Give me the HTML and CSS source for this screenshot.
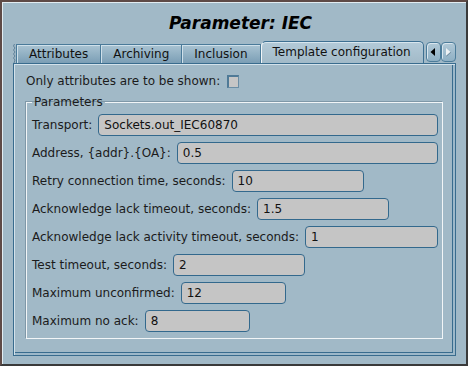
FILE: index.html
```html
<!DOCTYPE html>
<html lang="en">
<head>
    <meta charset="UTF-8">
    <title>Parameter: IEC</title>
    <link rel="stylesheet" href="styles.css">
</head>
<body>
    <div class="window">
        <div class="frame">
            <h1 class="title">Parameter: IEC</h1>

            <div class="tabs">
                <svg class="tear" width="3" height="19" viewBox="0 0 3 19">
                    <path d="M1.5 0 L0.5 2 L2 4 L0.5 6 L2 8 L0.5 10 L2 12 L0.5 14 L2 16 L1 19" fill="none" stroke="#5f8099" stroke-width="1"/>
                </svg>
                <div class="tab first">Attributes</div>
                <div class="tab">Archiving</div>
                <div class="tab">Inclusion</div>
                <div class="tab active">Template configuration</div>
                <div class="arrows">
                    <div class="arrow">
                        <svg width="13" height="18" viewBox="0 0 13 18"><polygon points="8,5 8,13 3.5,9" fill="#000"/></svg>
                    </div>
                    <div class="arrow">
                        <svg width="13" height="18" viewBox="0 0 13 18"><polygon points="4,5 4,13 8.5,9" fill="#eef2f4"/><polygon points="4,13 8.5,9 9.2,9.5 4.6,13.6" fill="#6f8a9c"/></svg>
                    </div>
                </div>
            </div>

            <div class="panel">
                <div class="check-row">
                    <span>Only attributes are to be shown:</span>
                    <span class="checkbox"></span>
                </div>

                <fieldset class="group">
                    <legend>Parameters</legend>
                    <div class="row">
                        <span>Transport:</span>
                        <div class="field grow">Sockets.out_IEC60870</div>
                    </div>
                    <div class="row">
                        <span>Address, {addr}.{OA}:</span>
                        <div class="field grow">0.5</div>
                    </div>
                    <div class="row">
                        <span>Retry connection time, seconds:</span>
                        <div class="field w132">10</div>
                    </div>
                    <div class="row">
                        <span>Acknowledge lack timeout, seconds:</span>
                        <div class="field w132">1.5</div>
                    </div>
                    <div class="row">
                        <span>Acknowledge lack activity timeout, seconds:</span>
                        <div class="field grow">1</div>
                    </div>
                    <div class="row">
                        <span>Test timeout, seconds:</span>
                        <div class="field w132">2</div>
                    </div>
                    <div class="row">
                        <span>Maximum unconfirmed:</span>
                        <div class="field w105">12</div>
                    </div>
                    <div class="row">
                        <span>Maximum no ack:</span>
                        <div class="field w105">8</div>
                    </div>
                </fieldset>
            </div>
        </div>
    </div>
</body>
</html>
```

FILE: styles.css
```css
body {
    margin: 0;
    font-family: "DejaVu Sans", sans-serif;
    font-size: 12px;
    color: #1b1b1b;
    background-color: #a1b9c7;
}
.window {
    width: 468px;
    height: 366px;
    box-sizing: border-box;
    border: 2px solid #3a3a3a;
    border-left-color: #5e4a46;
    border-top-color: #5e4a46;
    background-color: #a1b9c7;
}
.frame {
    height: 100%;
    box-sizing: border-box;
    border-top: 1px solid #e2ecf1;
    border-left: 1px solid #e2ecf1;
    padding: 0 10px;
}
.title {
    margin: 0;
    height: 38px;
    line-height: 40px;
    text-align: center;
    font-size: 17px;
    font-weight: bold;
    font-style: italic;
    color: #000;
    padding-left: 12px;
}
.tabs {
    display: flex;
    align-items: flex-end;
    height: 22px;
}
.tear {
    display: block;
}
.tab {
    height: 19px;
    line-height: 19px;
    padding: 0 12px;
    box-sizing: border-box;
    border: 1px solid #4a7a99;
    border-left: none;
    border-bottom: none;
    background: linear-gradient(#a9c3d2, #7b9eb5);
    box-shadow: inset 1px 1px 0 #cfe0ea;
    color: #111;
}
.tab.first {
    border-left: 1px solid #4a7a99;
}
.tab.active {
    height: 22px;
    line-height: 21px;
    padding: 0 12px 0 11px;
    margin-right: 1px;
    border-left: 1px solid #f2f6f8;
    border-top: 1px solid #3e7092;
    border-right: 1px solid #3e7092;
    border-radius: 5px 5px 0 0;
    background: linear-gradient(#b3cad8, #a2bac8);
    box-shadow: inset 0 1px 0 #d8e6ee;
}
.arrows {
    margin-left: auto;
    display: flex;
    align-self: stretch;
    padding: 1px 0;
}
.arrow {
    width: 15px;
    height: 20px;
    box-sizing: border-box;
    border: 1px solid #4c7c9a;
    border-radius: 4px;
    background: linear-gradient(#b0c8d6, #8fb0c4);
    box-shadow: inset 1px 1px 0 #d9e6ee;
}
.arrow svg {
    display: block;
}
.panel {
    height: 293px;
    box-sizing: border-box;
    border: 1px solid #396c8e;
    box-shadow: inset 1px 1px 0 #d3e2eb, inset -2px -2px 0 #9db8c9, inset -3px -3px 0 #396c8e;
    padding: 9px 12px 0 12px;
}
.check-row {
    display: flex;
    align-items: center;
    gap: 7px;
    height: 16px;
}
.checkbox {
    width: 12px;
    height: 13px;
    box-sizing: border-box;
    background-color: #c6c6c6;
    border: 1px solid #6b8ea5;
    border-top: 2px solid #4f7a97;
    border-left: 2px solid #4f7a97;
}
.group {
    margin: 6px 0 0 0;
    padding: 4px 4px 6px 5px;
    border: 1px solid #f1f5f7;
    box-shadow: -1px -1px 0 #7f98a8;
    min-width: 0;
}
.group legend {
    margin-left: 0;
    padding: 0 2px;
    line-height: 15px;
}
.row {
    display: flex;
    align-items: center;
    gap: 6px;
    height: 22px;
    margin-bottom: 6px;
    white-space: nowrap;
}
.row:last-child {
    margin-bottom: 0;
}
.field {
    height: 22px;
    box-sizing: border-box;
    border: 1px solid #33698d;
    border-radius: 4px;
    background-color: #c5c5c5;
    padding: 0 5px;
    line-height: 20px;
    color: #111;
}
.grow {
    flex: 1;
}
.w132 {
    width: 132px;
}
.w105 {
    width: 105px;
}
```
